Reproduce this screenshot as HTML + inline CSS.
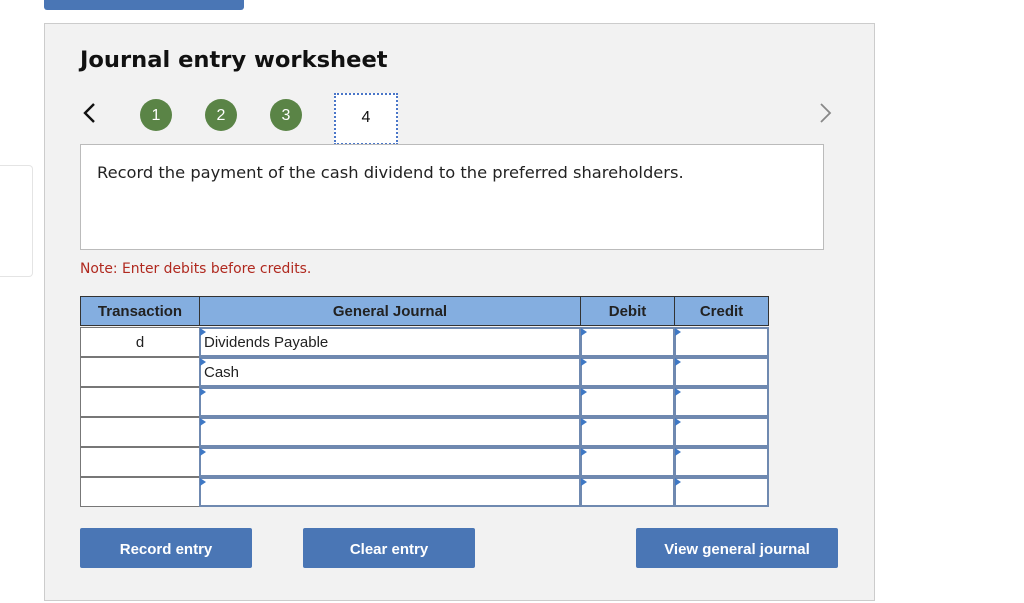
<!DOCTYPE html>
<html><head><style>
body{margin:0;width:1024px;height:603px;background:#fff;position:relative;overflow:hidden;font-family:"Liberation Sans",Arial,sans-serif}
.a{position:absolute}
.circ{position:absolute;width:32px;height:32px;border-radius:50%;background:#5a8446;color:#fff;font-size:16px;text-align:center;line-height:34px;top:99px}
.btn{position:absolute;top:528px;height:40px;background:#4a76b5;color:#fff;font-weight:bold;font-size:15px;text-align:center;line-height:43px;border-radius:2px}
.th{position:absolute;top:296px;height:30px;background:#84aee0;border:1px solid #333;box-sizing:border-box;font-weight:bold;font-size:15px;text-align:center;line-height:30px;color:#222}
.tc{position:absolute;height:30px;background:#fff;border:1px solid #777;box-sizing:border-box;font-size:15px;text-align:center;line-height:30px;color:#222}
.in{position:absolute;height:30px;background:#fff;border:2px solid #6f89b0;box-sizing:border-box;font-size:15px;line-height:28px;padding-left:3px;color:#222}
.in:before{content:"";position:absolute;left:-1px;top:-1px;border-left:6px solid #3f78c4;border-top:4px solid transparent;border-bottom:4px solid transparent}
</style></head><body>
<div class="a" style="left:44px;top:0;width:200px;height:10px;background:#4a76b5;border-radius:0 0 3px 3px"></div>
<div class="a" style="left:0;top:165px;width:32px;height:110px;border:1px solid #e4e4e4;border-left:none;border-radius:0 4px 4px 0"></div>
<div class="a" style="left:44px;top:23px;width:829px;height:576px;background:#f2f2f2;border:1px solid #ccc"></div>
<div class="a" style="left:80px;top:47px;font-size:22.6px;font-weight:bold;color:#111;font-family:'DejaVu Sans',sans-serif">Journal entry worksheet</div>
<svg class="a" style="left:82px;top:102px" width="16" height="22"><path d="M12 2 L3 11 L12 20" stroke="#111" stroke-width="2.4" fill="none"/></svg>
<svg class="a" style="left:818px;top:102px" width="16" height="22"><path d="M3 2 L12 11 L3 20" stroke="#888" stroke-width="1.8" fill="none"/></svg>
<div class="circ" style="left:140px">1</div>
<div class="circ" style="left:205px">2</div>
<div class="circ" style="left:270px">3</div>
<div class="a" style="left:334px;top:93px;width:64px;height:52px;background:#fff;border:2px dotted #4a76c8;box-sizing:border-box;text-align:center;line-height:46px;font-size:16px;color:#111">4</div>
<div class="a" style="left:80px;top:144px;width:744px;height:106px;background:#fff;border:1px solid #bbb;box-sizing:border-box"></div>
<div class="a" style="left:97px;top:163px;font-size:16.3px;color:#222;font-family:'DejaVu Sans',sans-serif">Record the payment of the cash dividend to the preferred shareholders.</div>
<div class="a" style="left:80px;top:261px;font-size:13.9px;color:#b0291f;font-family:'DejaVu Sans',sans-serif">Note: Enter debits before credits.</div>
<div class="th" style="left:80px;width:120px">Transaction</div>
<div class="th" style="left:199px;width:382px">General Journal</div>
<div class="th" style="left:580px;width:95px">Debit</div>
<div class="th" style="left:674px;width:95px">Credit</div>
<div class="tc" style="left:80px;top:327px;width:120px">d</div>
<div class="tc" style="left:80px;top:357px;width:120px"></div>
<div class="tc" style="left:80px;top:387px;width:120px"></div>
<div class="tc" style="left:80px;top:417px;width:120px"></div>
<div class="tc" style="left:80px;top:447px;width:120px"></div>
<div class="tc" style="left:80px;top:477px;width:120px"></div>
<div class="in" style="left:199px;top:327px;width:382px">Dividends Payable</div>
<div class="in" style="left:199px;top:357px;width:382px">Cash</div>
<div class="in" style="left:199px;top:387px;width:382px"></div>
<div class="in" style="left:199px;top:417px;width:382px"></div>
<div class="in" style="left:199px;top:447px;width:382px"></div>
<div class="in" style="left:199px;top:477px;width:382px"></div>
<div class="in" style="left:580px;top:327px;width:95px"></div>
<div class="in" style="left:580px;top:357px;width:95px"></div>
<div class="in" style="left:580px;top:387px;width:95px"></div>
<div class="in" style="left:580px;top:417px;width:95px"></div>
<div class="in" style="left:580px;top:447px;width:95px"></div>
<div class="in" style="left:580px;top:477px;width:95px"></div>
<div class="in" style="left:674px;top:327px;width:95px"></div>
<div class="in" style="left:674px;top:357px;width:95px"></div>
<div class="in" style="left:674px;top:387px;width:95px"></div>
<div class="in" style="left:674px;top:417px;width:95px"></div>
<div class="in" style="left:674px;top:447px;width:95px"></div>
<div class="in" style="left:674px;top:477px;width:95px"></div>
<div class="btn" style="left:80px;width:172px">Record entry</div>
<div class="btn" style="left:303px;width:172px">Clear entry</div>
<div class="btn" style="left:636px;width:202px">View general journal</div>
</body></html>
